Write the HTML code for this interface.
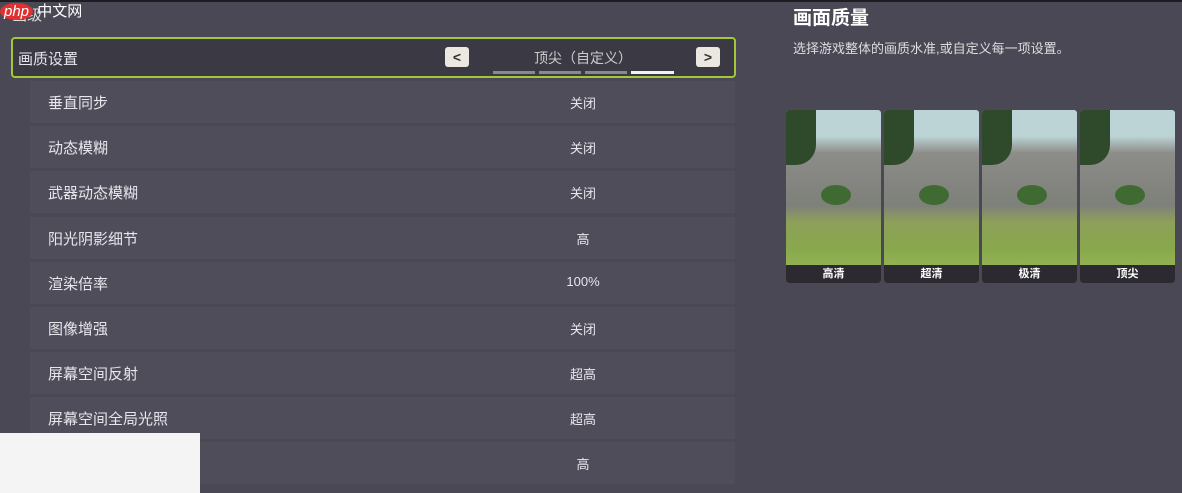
<html><head><style>
body{margin:0;width:1182px;height:493px;background:#4b4855;font-family:"Liberation Sans","Noto Sans CJK SC",sans-serif;color:#e8e6ec;position:relative;overflow:hidden}
.a{position:absolute}
.row{position:absolute;left:30px;width:705px;height:42px;background:#504d5a;font-size:15px}
.row .l{position:absolute;left:18px;top:11px}
.row .v{position:absolute;left:523px;width:60px;text-align:center;top:12px;font-size:13px}
.btn{position:absolute;width:24px;height:20px;background:#ebe8e2;border-radius:3px;color:#333;font-size:14px;font-weight:bold;text-align:center;line-height:20px}
.pic{position:absolute;top:110px;width:95px;height:173px;border-radius:3px;overflow:hidden;background:linear-gradient(#bcd4d6 0,#bcd4d6 15%,#8c8c88 25%,#7e807a 55%,#8ea05a 65%,#88a84c 80%,#9cbc58 100%)}
.pic .t{position:absolute;left:0;top:0;width:30px;height:55px;background:#2f4a2a;border-radius:0 0 20px 0}
.pic .tr{position:absolute;left:35px;top:75px;width:30px;height:20px;background:#3f6a32;border-radius:50%}
.pic .b{position:absolute;bottom:0;width:100%;height:18px;background:#2c2a30;color:#fff;font-size:11px;font-weight:bold;text-align:center;line-height:18px}
</style></head><body>
<div class="a" style="left:0;top:0;width:1182px;height:2px;background:#1e1d22"></div>
<div class="a" style="left:12px;top:4px;font-size:15px;color:#ddd">画级</div>
<div class="a" style="left:0;top:0;width:110px;height:22px;color:#fff;font-size:15px"><span style="background:#e03030;border-radius:50%;padding:0 4px;font-style:italic">php</span> 中文网</div>
<div class="a" style="left:11px;top:37px;width:721px;height:37px;border:2px solid #a4c639;border-radius:4px;background:#3b3944"></div>
<div class="a" style="left:18px;top:48px;font-size:15px">画质设置</div>
<div class="btn" style="left:445px;top:47px">&lt;</div>
<div class="btn" style="left:696px;top:47px">&gt;</div>
<div class="a" style="left:500px;top:48px;width:166px;text-align:center;font-size:14px;color:#ccc">顶尖（自定义）</div>
<div class="a" style="left:493px;top:71px;width:42px;height:3px;background:#8a8894"></div>
<div class="a" style="left:539px;top:71px;width:42px;height:3px;background:#8a8894"></div>
<div class="a" style="left:585px;top:71px;width:42px;height:3px;background:#8a8894"></div>
<div class="a" style="left:631px;top:71px;width:43px;height:3px;background:#f2f2f2"></div>
<div class="row" style="top:81px"><span class="l">垂直同步</span><span class="v">关闭</span></div>
<div class="row" style="top:126px"><span class="l">动态模糊</span><span class="v">关闭</span></div>
<div class="row" style="top:171px"><span class="l">武器动态模糊</span><span class="v">关闭</span></div>
<div class="row" style="top:217px"><span class="l">阳光阴影细节</span><span class="v">高</span></div>
<div class="row" style="top:262px"><span class="l">渲染倍率</span><span class="v">100%</span></div>
<div class="row" style="top:307px"><span class="l">图像增强</span><span class="v">关闭</span></div>
<div class="row" style="top:352px"><span class="l">屏幕空间反射</span><span class="v">超高</span></div>
<div class="row" style="top:397px"><span class="l">屏幕空间全局光照</span><span class="v">超高</span></div>
<div class="row" style="top:442px"><span class="l"></span><span class="v">高</span></div>
<div class="a" style="left:0;top:433px;width:200px;height:60px;background:#f4f4f4"></div>
<div class="a" style="left:793px;top:3px;font-size:19px;font-weight:bold;color:#fff">画面质量</div>
<div class="a" style="left:793px;top:38px;font-size:13px;color:#ddd">选择游戏整体的画质水准,或自定义每一项设置。</div>
<div class="pic" style="left:786px"><div class="t"></div><div class="tr"></div><div class="b">高清</div></div>
<div class="pic" style="left:884px"><div class="t"></div><div class="tr"></div><div class="b">超清</div></div>
<div class="pic" style="left:982px"><div class="t"></div><div class="tr"></div><div class="b">极清</div></div>
<div class="pic" style="left:1080px"><div class="t"></div><div class="tr"></div><div class="b">顶尖</div></div>
</body></html>
